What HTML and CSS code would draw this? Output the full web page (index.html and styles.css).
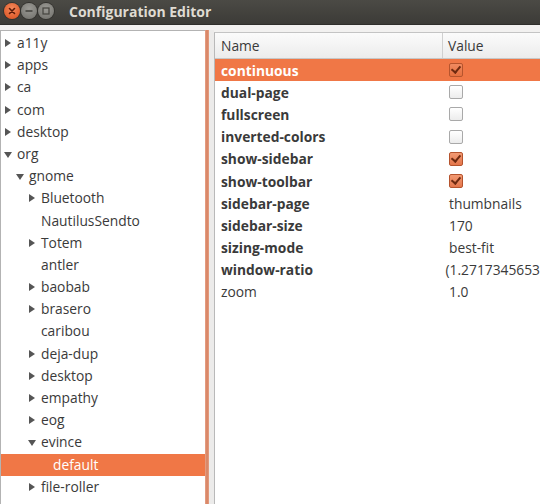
FILE: index.html
```html
<!DOCTYPE html>
<html>
<head>
<meta charset="utf-8">
<link rel="stylesheet" href="styles.css">
</head>
<body>
<div class="window">
  <div class="titlebar">
    <div class="wbtns">
      <span class="wbtn close"><svg width="16" height="16" viewBox="0 0 16 16"><path d="M5.5 5.5 L10.5 10.5 M10.5 5.5 L5.5 10.5" stroke="#5a1a08" stroke-width="1.6" stroke-linecap="round"/></svg></span>
      <span class="wbtn"><svg width="16" height="16" viewBox="0 0 16 16"><path d="M4.5 8 H11.5" stroke="#45443f" stroke-width="1.6"/></svg></span>
      <span class="wbtn"><svg width="16" height="16" viewBox="0 0 16 16"><rect x="5" y="5" width="6" height="6" fill="none" stroke="#45443f" stroke-width="1.2"/></svg></span>
    </div>
    <div class="title">Configuration Editor</div>
  </div>
  <div class="content">
    <div class="tree">
      <div class="trow l0"><span class="arr r"></span>a11y</div>
      <div class="trow l0"><span class="arr r"></span>apps</div>
      <div class="trow l0"><span class="arr r"></span>ca</div>
      <div class="trow l0"><span class="arr r"></span>com</div>
      <div class="trow l0"><span class="arr r"></span>desktop</div>
      <div class="trow l0"><span class="arr d"></span>org</div>
      <div class="trow l1"><span class="arr d"></span>gnome</div>
      <div class="trow l2"><span class="arr r"></span>Bluetooth</div>
      <div class="trow l2"><span class="arr"></span>NautilusSendto</div>
      <div class="trow l2"><span class="arr r"></span>Totem</div>
      <div class="trow l2"><span class="arr"></span>antler</div>
      <div class="trow l2"><span class="arr r"></span>baobab</div>
      <div class="trow l2"><span class="arr r"></span>brasero</div>
      <div class="trow l2"><span class="arr"></span>caribou</div>
      <div class="trow l2"><span class="arr r"></span>deja-dup</div>
      <div class="trow l2"><span class="arr r"></span>desktop</div>
      <div class="trow l2"><span class="arr r"></span>empathy</div>
      <div class="trow l2"><span class="arr r"></span>eog</div>
      <div class="trow l2"><span class="arr d"></span>evince</div>
      <div class="trow l3 sel"><span class="arr"></span>default</div>
      <div class="trow l2"><span class="arr r"></span>file-roller</div>
    </div>
    <div class="handle"></div>
    <div class="gap"></div>
    <div class="list">
      <div class="head">
        <div class="hname">Name</div>
        <div class="hval">Value</div>
      </div>
      <div class="row sel"><div class="name">continuous</div><div class="val"><span class="cb on"></span></div></div>
      <div class="row"><div class="name">dual-page</div><div class="val"><span class="cb"></span></div></div>
      <div class="row"><div class="name">fullscreen</div><div class="val"><span class="cb"></span></div></div>
      <div class="row"><div class="name">inverted-colors</div><div class="val"><span class="cb"></span></div></div>
      <div class="row"><div class="name">show-sidebar</div><div class="val"><span class="cb on"></span></div></div>
      <div class="row"><div class="name">show-toolbar</div><div class="val"><span class="cb on"></span></div></div>
      <div class="row"><div class="name">sidebar-page</div><div class="val">thumbnails</div></div>
      <div class="row"><div class="name">sidebar-size</div><div class="val">170</div></div>
      <div class="row"><div class="name">sizing-mode</div><div class="val">best-fit</div></div>
      <div class="row"><div class="name">window-ratio</div><div class="val">(1.2717345653</div></div>
      <div class="row"><div class="name plain">zoom</div><div class="val">1.0</div></div>
    </div>
  </div>
</div>
</body>
</html>
```
FILE: styles.css
```css
html, body {
  margin: 0;
  padding: 0;
  width: 540px;
  height: 504px;
  overflow: hidden;
  background: #f2f1f0;
  font-family: "Open Sans", "DejaVu Sans", sans-serif;
  font-size: 13.8px;
  color: #3a3a3a;
}
.window {
  display: flex;
  flex-direction: column;
  height: 504px;
}
.titlebar {
  height: 24px;
  flex: none;
  display: flex;
  align-items: center;
  background: linear-gradient(#4b4a45, #3c3b37);
  border-bottom: 1px solid #2f2e2b;
}
.wbtns {
  display: flex;
  padding-left: 4px;
  margin-top: -2px;
}
.wbtn {
  width: 16px;
  height: 16px;
  border-radius: 50%;
  background: radial-gradient(circle at 50% 35%, #9b9a95, #6f6e69);
  box-shadow: 0 0 0 1px #34332f;
  display: flex;
}
.wbtn.close {
  background: radial-gradient(circle at 50% 35%, #f4895c, #d94d1b);
}
.wbtns .wbtn + .wbtn { margin-left: 1px; }
.title {
  margin-left: 15px;
  font-weight: bold;
  font-size: 14px;
  color: #dfdbd2;
  margin-top: -2px;
}
.content {
  flex: 1;
  display: flex;
  padding-top: 5px;
  min-height: 0;
}
.tree {
  width: 204px;
  flex: none;
  background: #fff;
  border-left: 1px solid #b3b3b3;
  border-top: 1px solid #b3b3b3;
  padding-top: 1px;
  overflow: hidden;
}
.trow {
  height: 22.2px;
  line-height: 22.2px;
  display: flex;
  align-items: center;
  white-space: nowrap;
}
.trow.l0 { padding-left: 3px; }
.trow.l1 { padding-left: 15px; }
.trow.l2 { padding-left: 27px; }
.trow.l3 { padding-left: 39px; }
.trow.sel { background: #f07746; color: #fff; }
.arr {
  width: 13px;
  height: 10px;
  flex: none;
  position: relative;
}
.arr.r::before {
  content: "";
  position: absolute;
  left: 1px;
  top: 1px;
  border-left: 6px solid #555;
  border-top: 4px solid transparent;
  border-bottom: 4px solid transparent;
}
.arr.d::before {
  content: "";
  position: absolute;
  left: 0;
  top: 3px;
  border-top: 6px solid #555;
  border-left: 4px solid transparent;
  border-right: 4px solid transparent;
}
.handle {
  width: 4px;
  flex: none;
  background: linear-gradient(90deg, #e7a48b, #d6805f 50%, #e5a085);
}
.gap {
  width: 5px;
  flex: none;
  background: #ecebea;
}
.list {
  flex: 1;
  margin-top: 2px;
  background: #fff;
  border-left: 1px solid #b9b9b9;
  border-top: 1px solid #c4c4c4;
  overflow: hidden;
}
.head {
  height: 26px;
  display: flex;
  align-items: center;
  background: linear-gradient(#fbfbfb, #ececec);
  border-bottom: 1px solid #c7c7c7;
  box-sizing: border-box;
}
.hname {
  width: 228px;
  padding-left: 6px;
  height: 100%;
  display: flex;
  align-items: center;
  border-right: 1px solid #d0d0d0;
  box-sizing: border-box;
}
.hval { padding-left: 5px; }
.row {
  height: 22.2px;
  display: flex;
  align-items: center;
  white-space: nowrap;
}
.row.sel { background: #f07746; color: #fff; }
.name {
  width: 228px;
  padding-left: 6px;
  box-sizing: border-box;
  font-weight: bold;
}
.name.plain { font-weight: normal; }
.val { padding-left: 6px; display: flex; align-items: center; }
.cb {
  width: 12px;
  height: 12px;
  border: 1px solid #a9a9a9;
  border-radius: 2px;
  background: linear-gradient(#ffffff, #ececec);
  position: relative;
}
.cb.on {
  border-color: #b5532d;
  background: linear-gradient(#f29a73, #e4764b);
}
.row.sel .cb.on {
  border-color: #b6542d;
  background: linear-gradient(#f08a60, #e5703f);
}
.cb.on::after {
  content: "";
  position: absolute;
  left: 3px;
  top: 0px;
  width: 4px;
  height: 7px;
  border-right: 2px solid #6e2a10;
  border-bottom: 2px solid #6e2a10;
  transform: rotate(40deg);
}
```
